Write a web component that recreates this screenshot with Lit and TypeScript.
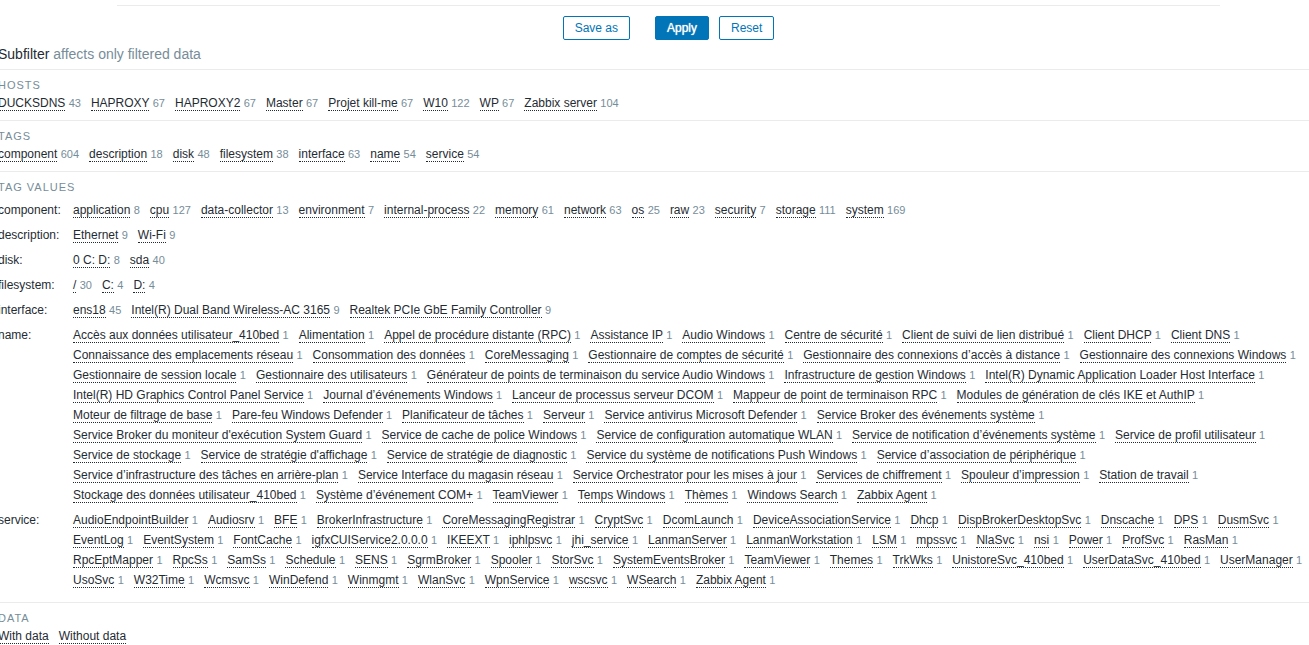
import { LitElement, html, css, nothing } from "lit";
import { customElement, property } from "lit/decorators.js";

type Entry = [label: string, count?: number];

/** Parses "label|count; label|count" lists; entries without a count default to `fallback`. */
const list = (source: string, fallback?: number): Entry[] =>
  source.split(";").map((part) => {
    const [label, count] = part.trim().split("|");
    return [label, count ? Number(count) : fallback];
  });

const HOSTS = list(
  "DUCKSDNS|43; HAPROXY|67; HAPROXY2|67; Master|67; Projet kill-me|67; W10|122; WP|67; Zabbix server|104"
);

const TAGS = list(
  "component|604; description|18; disk|48; filesystem|38; interface|63; name|54; service|54"
);

const TAG_VALUES: [string, Entry[]][] = [
  ["component", list(
    "application|8; cpu|127; data-collector|13; environment|7; internal-process|22; memory|61; network|63; os|25; raw|23; security|7; storage|111; system|169"
  )],
  ["description", list("Ethernet|9; Wi-Fi|9")],
  ["disk", list("0 C: D:|8; sda|40")],
  ["filesystem", list("/|30; C:|4; D:|4")],
  ["interface", list(
    "ens18|45; Intel(R) Dual Band Wireless-AC 3165|9; Realtek PCIe GbE Family Controller|9"
  )],
  ["name", list(
    `Accès aux données utilisateur_410bed; Alimentation; Appel de procédure distante (RPC); Assistance IP;
    Audio Windows; Centre de sécurité; Client de suivi de lien distribué; Client DHCP; Client DNS;
    Connaissance des emplacements réseau; Consommation des données; CoreMessaging;
    Gestionnaire de comptes de sécurité; Gestionnaire des connexions d’accès à distance;
    Gestionnaire des connexions Windows; Gestionnaire de session locale; Gestionnaire des utilisateurs;
    Générateur de points de terminaison du service Audio Windows; Infrastructure de gestion Windows;
    Intel(R) Dynamic Application Loader Host Interface; Intel(R) HD Graphics Control Panel Service;
    Journal d’événements Windows; Lanceur de processus serveur DCOM;
    Mappeur de point de terminaison RPC; Modules de génération de clés IKE et AuthIP;
    Moteur de filtrage de base; Pare-feu Windows Defender; Planificateur de tâches; Serveur;
    Service antivirus Microsoft Defender; Service Broker des événements système;
    Service Broker du moniteur d'exécution System Guard; Service de cache de police Windows;
    Service de configuration automatique WLAN; Service de notification d’événements système;
    Service de profil utilisateur; Service de stockage; Service de stratégie d'affichage;
    Service de stratégie de diagnostic; Service du système de notifications Push Windows;
    Service d’association de périphérique; Service d’infrastructure des tâches en arrière-plan;
    Service Interface du magasin réseau; Service Orchestrator pour les mises à jour;
    Services de chiffrement; Spouleur d’impression; Station de travail;
    Stockage des données utilisateur_410bed; Système d’événement COM+; TeamViewer; Temps Windows;
    Thèmes; Windows Search; Zabbix Agent`,
    1
  )],
  ["service", list(
    `AudioEndpointBuilder; Audiosrv; BFE; BrokerInfrastructure; CoreMessagingRegistrar; CryptSvc;
    DcomLaunch; DeviceAssociationService; Dhcp; DispBrokerDesktopSvc; Dnscache; DPS; DusmSvc; EventLog;
    EventSystem; FontCache; igfxCUIService2.0.0.0; IKEEXT; iphlpsvc; jhi_service; LanmanServer;
    LanmanWorkstation; LSM; mpssvc; NlaSvc; nsi; Power; ProfSvc; RasMan; RpcEptMapper; RpcSs; SamSs;
    Schedule; SENS; SgrmBroker; Spooler; StorSvc; SystemEventsBroker; TeamViewer; Themes; TrkWks;
    UnistoreSvc_410bed; UserDataSvc_410bed; UserManager; UsoSvc; W32Time; Wcmsvc; WinDefend; Winmgmt;
    WlanSvc; WpnService; wscsvc; WSearch; Zabbix Agent`,
    1
  )],
];

const DATA = list("With data; Without data");

@customElement("subfilter-options")
export class SubfilterOptions extends LitElement {
  @property({ attribute: false }) entries: Entry[] = [];

  static styles = css`
    :host {
      display: block;
    }
    .options {
      display: flex;
      flex-wrap: wrap;
      gap: 2px 10px;
      margin: 0;
      padding: 0;
      list-style: none;
    }
    .option {
      height: 18px;
      line-height: 18px;
      white-space: nowrap;
    }
    .link {
      color: #1f2c33;
      text-decoration: none;
      border-bottom: 1px dotted #1f2c33;
    }
    .count {
      font-size: 11px;
      color: #768d99;
    }
  `;

  render() {
    return html`<ul class="options">
      ${this.entries.map(
        ([label, count]) => html`<li class="option">
          <a class="link" href="#">${label}</a>
          ${count === undefined ? nothing : html`<span class="count">${count}</span>`}
        </li>`
      )}
    </ul>`;
  }
}

@customElement("app-root")
export class AppRoot extends LitElement {
  static styles = css`
    :host {
      display: block;
      overflow-x: hidden;
      background: #fff;
      color: #1f2c33;
      font-family: "Liberation Sans", Arial, sans-serif;
      font-size: 12px;
      line-height: 18px;
    }
    .filter {
      margin: 5px 89px 0 117px;
      padding-top: 10px;
      border-top: 1px solid #ebebeb;
      display: flex;
      justify-content: center;
      gap: 10px;
    }
    .button {
      height: 24px;
      padding: 0 11px;
      border: 1px solid #0275b8;
      border-radius: 2px;
      background: #fff;
      color: #0275b8;
      font: inherit;
      cursor: pointer;
    }
    .save {
      margin-right: 15px;
    }
    .primary {
      background: #0275b8;
      color: #fff;
      text-shadow: 0 0 1px #fff;
    }
    .subfilter {
      margin-left: -2px;
    }
    .title {
      margin: 0;
      padding: 5px 0 6px;
      font-size: 14px;
      line-height: 18px;
      font-weight: 400;
    }
    .hint {
      color: #768d99;
    }
    .section {
      border-top: 1px solid #ebebeb;
      padding: 8px 0;
    }
    .section:last-child {
      padding-bottom: 0;
    }
    .heading {
      margin: 0 0 2px;
      font-size: 11px;
      line-height: 14px;
      font-weight: 400;
      letter-spacing: 1px;
      text-transform: uppercase;
      color: #768d99;
    }
    .values {
      display: grid;
      grid-template-columns: 65px 1fr;
      gap: 7px 10px;
      margin: 7px 0 5px;
    }
    .name {
      white-space: nowrap;
    }
    .cell {
      margin: 0;
    }
  `;

  private section(title: string, entries: Entry[]) {
    return html`<section class="section">
      <h4 class="heading">${title}</h4>
      <subfilter-options .entries=${entries}></subfilter-options>
    </section>`;
  }

  render() {
    return html`
      <form class="filter" @submit=${(e: Event) => e.preventDefault()}>
        <button class="button save" type="button">Save as</button>
        <button class="button primary" type="submit">Apply</button>
        <button class="button" type="reset">Reset</button>
      </form>
      <div class="subfilter">
        <h3 class="title">Subfilter <span class="hint">affects only filtered data</span></h3>
        ${this.section("Hosts", HOSTS)}
        ${this.section("Tags", TAGS)}
        <section class="section">
          <h4 class="heading">Tag values</h4>
          <dl class="values">
            ${TAG_VALUES.map(
              ([name, entries]) => html`<dt class="name">${name}:</dt>
                <dd class="cell"><subfilter-options .entries=${entries}></subfilter-options></dd>`
            )}
          </dl>
        </section>
        ${this.section("Data", DATA)}
      </div>
    `;
  }
}
